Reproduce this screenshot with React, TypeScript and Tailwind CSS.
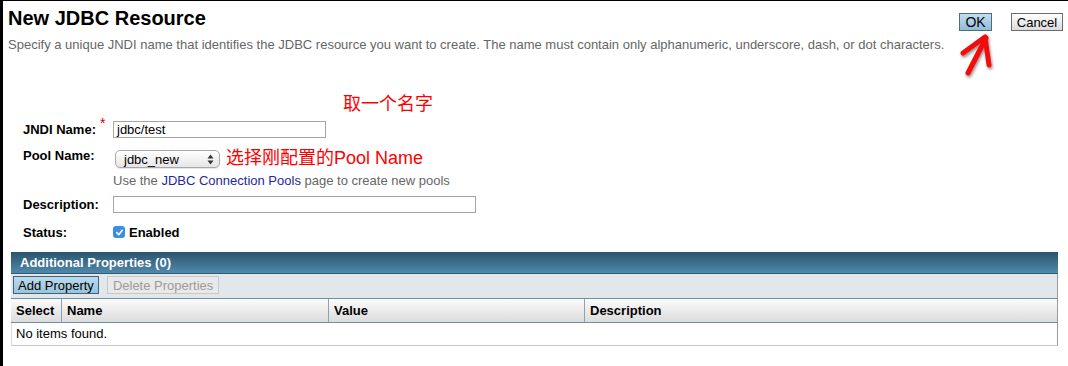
import React from "react";

function Arrow() {
  return (
    <svg className="absolute left-[950px] top-[28px]" width="50" height="56" viewBox="0 0 50 56">
      <defs>
        <filter id="sh" x="-30%" y="-30%" width="160%" height="160%">
          <feDropShadow dx="1" dy="2" stdDeviation="1.5" floodColor="#000" floodOpacity="0.45" />
        </filter>
      </defs>
      <g filter="url(#sh)" stroke="#f20d0d" strokeWidth="5" strokeLinecap="round" strokeLinejoin="round" fill="none">
        <path d="M15 44 L33 9" />
        <path d="M10 24 L32 8 L36 36" />
      </g>
    </svg>
  );
}

function Check() {
  return (
    <div className="w-[12px] h-[12px] rounded-[3px] bg-[#3a8ee8] flex items-center justify-center">
      <svg width="9" height="9" viewBox="0 0 10 10">
        <path d="M2 5.2 L4.2 7.4 L8 2.6" stroke="#fff" strokeWidth="1.8" fill="none" strokeLinecap="round" strokeLinejoin="round" />
      </svg>
    </div>
  );
}

export default function App() {
  return (
    <div className="relative w-[1068px] h-[366px] bg-white border-t border-l-[3px] border-black overflow-hidden font-['Liberation_Sans','Noto_Sans_CJK_SC',sans-serif] text-[13px] text-black">
      {/* Header */}
      <div className="flex items-start justify-between pl-[5px] pr-[5px]">
        <div className="pt-[5px]">
          <div className="text-[20px] leading-[24px] font-bold">New JDBC Resource</div>
          <div className="mt-[7px] text-[13px] leading-[15px] text-[#666]">
            Specify a unique JNDI name that identifies the JDBC resource you want to create. The name must contain only alphanumeric, underscore, dash, or dot characters.
          </div>
        </div>
        <div className="flex gap-[19px] mt-[12px]">
          <div className="w-[33px] h-[18px] flex items-center justify-center border border-[#4f6b7c] bg-gradient-to-b from-[#c4def0] to-[#8fbcd7] text-[14px] leading-none">OK</div>
          <div className="w-[52px] h-[18px] flex items-center justify-center border border-[#6d6d6d] bg-gradient-to-b from-[#ffffff] to-[#dcdcdc] text-[13px] leading-none">Cancel</div>
        </div>
      </div>

      {/* Form */}
      <div className="pl-[20px]">
        <div className="mt-[40px] pl-[320px] h-[24px] text-[18px] leading-[24px] text-[#f00]">取一个名字</div>

        <div className="mt-[5px] flex items-center h-[17px]">
          <div className="w-[90px] font-bold leading-[15px] relative">
            JNDI Name:
            <span className="absolute left-[77px] top-[-6px] text-[#c00] font-normal text-[14px]">*</span>
          </div>
          <div className="w-[213px] h-[17px] border border-[#a5a5a5] pl-[3px] leading-[15px] text-[13px]">jdbc/test</div>
        </div>

        <div className="mt-[10px] flex items-start">
          <div className="w-[90px] font-bold leading-[15px]">Pool Name:</div>
          <div className="ml-[2px] mt-[2px] w-[105px] h-[18px] rounded-[5px] border border-[#a8a8a8] bg-gradient-to-b from-[#ffffff] to-[#e6e6e6] flex items-center justify-between pl-[8px] pr-[5px] shadow-[0_1px_1px_rgba(0,0,0,0.1)]">
            <span className="leading-none">jdbc_new</span>
            <svg width="7" height="11" viewBox="0 0 7 11">
              <path d="M3.5 0.5 L6.5 4.5 L0.5 4.5 Z" fill="#333" />
              <path d="M3.5 10.5 L6.5 6.5 L0.5 6.5 Z" fill="#333" />
            </svg>
          </div>
          <div className="ml-[6px] mt-[-2px] text-[18px] leading-[24px] text-[#f00]">选择刚配置的Pool Name</div>
        </div>

        <div className="mt-[3px] pl-[90px] leading-[15px] text-[#666]">
          Use the <span className="text-[#27279a]">JDBC Connection Pools</span> page to create new pools
        </div>

        <div className="mt-[8px] flex items-center h-[17px]">
          <div className="w-[90px] font-bold leading-[15px]">Description:</div>
          <div className="w-[363px] h-[17px] border border-[#a5a5a5]" />
        </div>

        <div className="mt-[12px] flex items-center h-[14px]">
          <div className="w-[90px] font-bold leading-[15px]">Status:</div>
          <Check />
          <span className="ml-[4px] font-bold leading-[15px]">Enabled</span>
        </div>
      </div>

      {/* Table */}
      <div className="ml-[8px] mt-[13px] w-[1047px]">
        <div className="h-[22px] bg-gradient-to-b from-[#2b546d] to-[#5089ab] border-b border-[#305a74] flex items-center pl-[9px] text-white font-bold leading-none">
          Additional Properties (0)
        </div>
        <div className="h-[24px] bg-[#e2e7eb] border-r border-[#9a9a9a] flex items-start pt-[2px] pl-[2px] gap-[8px]">
          <div className="h-[18px] px-[4px] flex items-center border border-[#3f6479] bg-gradient-to-b from-[#bcdaec] to-[#98c4dc] leading-none">Add Property</div>
          <div className="h-[18px] px-[5px] flex items-center border border-[#c8c8c8] bg-[#e9e9e9] text-[#9b9b9b] leading-none">Delete Properties</div>
        </div>
        <div className="h-[25px] flex border-t border-b border-[#6e8ea1] border-r border-r-[#9a9a9a] bg-gradient-to-b from-[#fbfbfb] to-[#dcdcdc] font-bold">
          <div className="w-[51px] border-r border-[#8ba3b1] flex items-center pl-[5px]">Select</div>
          <div className="w-[267px] border-r border-[#8ba3b1] flex items-center pl-[5px]">Name</div>
          <div className="w-[256px] border-r border-[#8ba3b1] flex items-center pl-[5px]">Value</div>
          <div className="flex-1 flex items-center pl-[5px]">Description</div>
        </div>
        <div className="h-[23px] flex items-center pl-[4px] border-l border-r border-b border-l-[#d8d8d8] border-r-[#9a9a9a] border-b-[#c8c8c8]">
          No items found.
        </div>
      </div>

      <Arrow />
    </div>
  );
}
